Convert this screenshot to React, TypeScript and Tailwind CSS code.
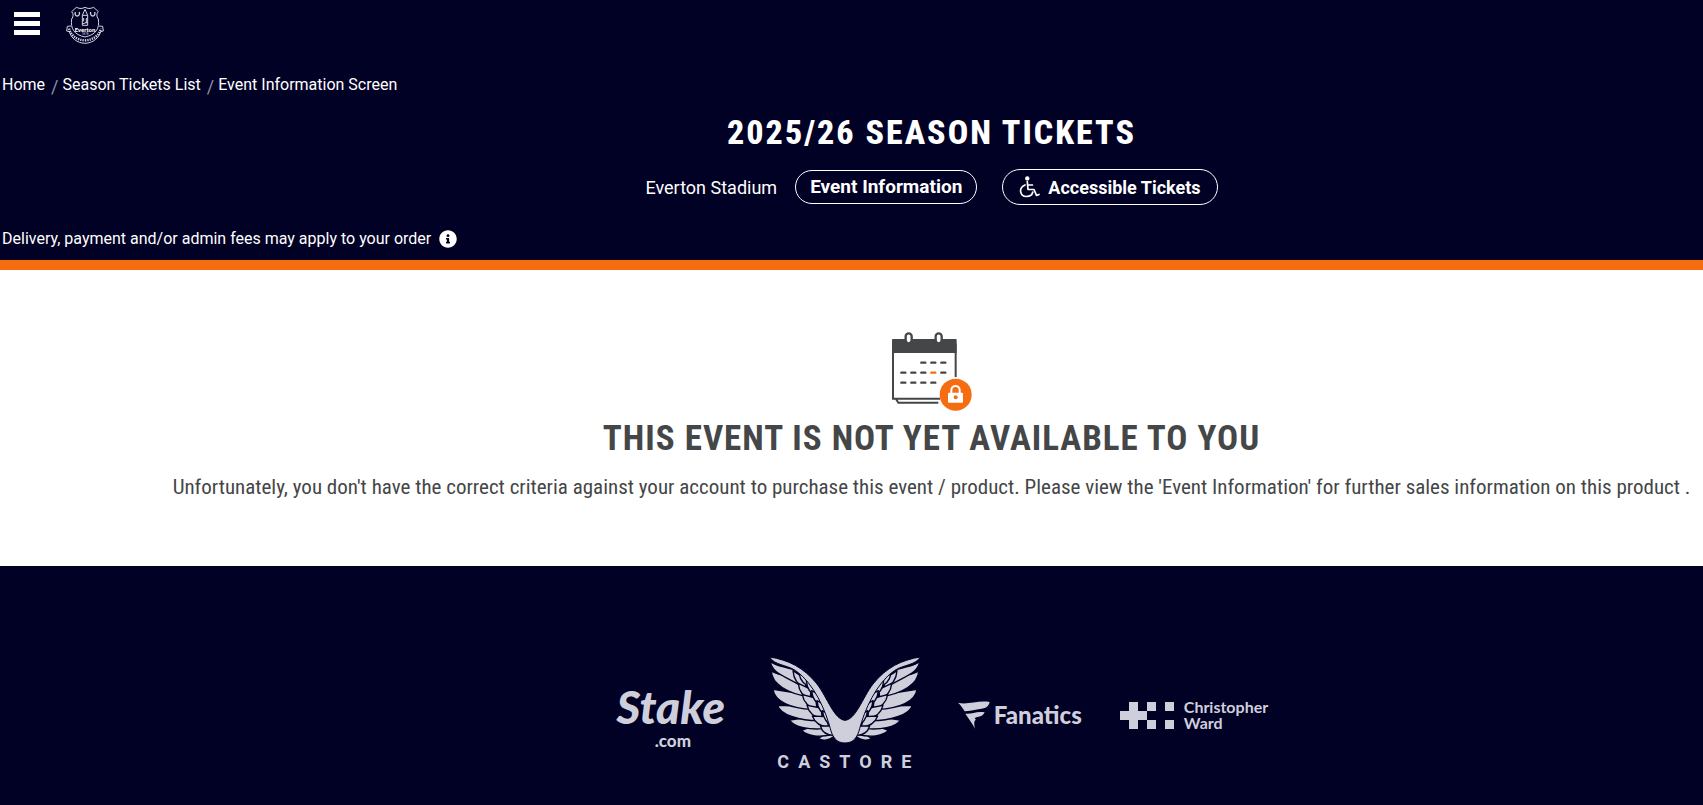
import type { ReactNode } from "react";
import { FaInfoCircle } from "react-icons/fa";

const crumbs = ["Home", "Season Tickets List", "Event Information Screen"];

function Crest() {
  return (
    <svg viewBox="0 0 114 114" className="size-[38px]" fill="none" stroke="#d4d4e4" strokeWidth="3">
      <path d="M31 4 C42 9 49 8 57 4 C65 8 72 9 83 4 L97 17 C91 23 91 31 97 39 C101 68 90 86 57 93 C24 86 13 68 17 39 C23 31 23 23 17 17Z" />
      <path d="M28 18 C23 34 44 34 40 18 M74 18 C70 34 91 34 86 18" strokeWidth="4" />
      <path d="M49 28 L57 10 L65 28 V58 H49Z M49 28 H65 M53 36 V46 M61 36 V52 M49 54 L65 48" strokeWidth="3" />
      <text x="57" y="77" textAnchor="middle" fontSize="18" fontWeight="700" fill="#fff" stroke="none" fontFamily="Roboto, sans-serif">Everton</text>
      <text x="57" y="87" textAnchor="middle" fontSize="9" fill="#d4d4e4" stroke="none" fontFamily="Roboto, sans-serif">1878</text>
      <path d="M15 60 L4 61 L2 75 L10 77 C15 95 32 111 57 112 C82 111 99 95 104 77 L112 75 L110 61 L99 60" strokeWidth="3" />
      <path d="M9 68 C15 88 32 102 57 103 C82 102 99 88 105 68" strokeWidth="7" strokeDasharray="4 3" />
    </svg>
  );
}

function WheelchairIcon() {
  return (
    <svg viewBox="0 0 21 22" className="h-[22px] w-[21px]" fill="none" stroke="currentColor" strokeWidth="1.7" strokeLinecap="round" strokeLinejoin="round">
      <circle cx="8.3" cy="2.4" r="2.2" fill="currentColor" stroke="none" />
      <path d="M8.3 5.5 L9 13.5 H15 L17.5 19.4 L20 18.5 M8.7 9 H13.5" />
      <path d="M6 9 C-1 12 1 20.5 7.5 20.5 C11 20.5 13.2 18.6 13.8 16" />
    </svg>
  );
}

function LockedCalendar() {
  return (
    <svg viewBox="0 0 243 240" className="h-20 w-[81px]" fill="none">
      <path d="M6 38 V203 H147 M194 38 V138" stroke="#444647" strokeWidth="6" />
      <path d="M15 204 L22 215 H142" stroke="#444647" strokeWidth="6" />
      <path d="M3 66 V27 Q3 24 6 24 H194 Q197 24 197 27 V66Z" fill="#444647" />
      <rect x="44" y="7" width="18" height="30" rx="9" fill="#fff" stroke="#444647" strokeWidth="7" />
      <rect x="134" y="7" width="18" height="30" rx="9" fill="#fff" stroke="#444647" strokeWidth="7" />
      <path d="M91 95 H103 M121 95 H133 M151 95 H163 M31 125 H43 M61 125 H73 M91 125 H103 M151 125 H163 M31 155 H43 M61 155 H73 M91 155 H103 M121 155 H133" stroke="#444647" strokeWidth="7" strokeLinecap="round" />
      <path d="M121 125 H133" stroke="#f56c11" strokeWidth="7" strokeLinecap="round" />
      <circle cx="194" cy="191" r="48" fill="#f56c11" />
      <rect x="171" y="185" width="45" height="30" rx="3" fill="#fff" />
      <path d="M181 186 V177 C181 161 206 161 206 177 V186" stroke="#fff" strokeWidth="6" />
      <circle cx="194" cy="199" r="6" fill="#f56c11" />
    </svg>
  );
}

function Wing() {
  return (
    <g fill="#cfcfdc" stroke="#010025" strokeWidth="4" strokeLinejoin="round">
      <path d="M172 296 C186 304 208 300 220 288 L200 276Z" />
      <path d="M122 270 C136 290 178 292 212 284 L186 250Z" />
      <path d="M86 240 C98 262 150 270 186 266 L168 228Z" />
      <path d="M50 196 C58 226 120 242 172 242 L150 200Z" />
      <path d="M36 148 C40 184 90 206 154 208 L136 164Z" />
      <path d="M31 93 C32 132 80 160 142 170 L112 116 C80 108 50 106 31 93Z" />
      <path d="M28 64 C32 98 66 106 118 136 L104 92 C76 80 44 80 28 64Z" />
      <path d="M96 92 C98 122 112 136 132 146 L138 120Z" />
      <path d="M112 130 C114 154 128 170 148 176 L150 148Z" />
      <path d="M124 164 C128 188 144 202 168 208 L164 174Z" />
      <path d="M138 196 C144 220 162 232 184 236 L180 204Z" />
      <path d="M154 228 C162 250 180 260 204 262 L194 230Z" />
      <path d="M178 258 C184 278 200 286 218 286 L208 258Z" />
      <path d="M114 100 C118 124 132 136 152 142 L146 120Z" />
      <path d="M136 122 C138 150 152 164 170 170 L162 138Z" />
      <path d="M152 152 C154 180 170 194 188 200 L178 166Z" />
      <path d="M168 182 C170 210 186 224 204 230 L194 196Z" />
      <path d="M184 212 C188 240 200 252 216 258 L208 226Z" />
    </g>
  );
}

function CastoreWings() {
  return (
    <svg viewBox="24 48 456 264" className="h-[88px] w-[152px]">
      <Wing />
      <g transform="translate(504 0) scale(-1 1)"><Wing /></g>
      <path
        d="M26 51 C82 60 128 82 168 132 C200 174 219 238 252 241 C285 238 304 174 336 132 C376 82 422 60 478 51 C464 76 426 74 400 92 C345 130 310 212 296 266 C289 292 278 309 252 309 C226 309 215 292 208 266 C194 212 159 130 104 92 C78 74 40 76 26 51Z"
        fill="#cfcfdc" stroke="#010025" strokeWidth="3"
      />
    </svg>
  );
}

function SponsorLink({ label, children, className }: { label: string; children: ReactNode; className: string }) {
  return (
    <a href="#" aria-label={label} className={`flex shrink-0 text-[#cfcfdc] ${className}`}>
      {children}
    </a>
  );
}

export default function App() {
  return (
    <div className="flex min-h-screen flex-col bg-[#010025] font-['Roboto',sans-serif] text-white">
      <header className="border-b-10 border-[#f56c11]">
        <div className="flex h-[50px] items-start gap-[26px] pl-3.5">
          <button type="button" aria-label="Menu" className="mt-3 flex w-[26px] flex-col gap-1">
            <span className="h-[5px] bg-white" />
            <span className="h-[5px] bg-white" />
            <span className="h-[5px] bg-white" />
          </button>
          <a href="#" aria-label="Everton" className="mt-1.5"><Crest /></a>
        </div>

        <nav aria-label="Breadcrumb" className="mt-[23px] pl-0.5">
          <ol className="flex text-[16px] leading-6">
            {crumbs.map((c, i) => (
              <li key={c} className="flex">
                {i > 0 && <span className="pt-0.5 pr-1 pl-1.5 text-[18px] leading-6 text-[#8f8fa8]">/</span>}
                <a href="#">{c}</a>
              </li>
            ))}
          </ol>
        </nav>

        <div className="flex flex-col items-center pl-40">
          <h1 className="mt-[13px] font-['Roboto_Condensed',Roboto,sans-serif] text-[34px] leading-10 font-extrabold tracking-[2px]">
            2025/26 SEASON TICKETS
          </h1>
          <div className="mt-[17px] flex items-center">
            <span className="mr-[18px] text-[18px]">Everton Stadium</span>
            <button type="button" className="mr-[25px] h-[34px] rounded-full border border-white px-3.5 text-[19px] font-bold">
              Event Information
            </button>
            <button type="button" className="flex h-9 items-center gap-2 rounded-full border border-white px-4 text-[18px] font-bold">
              <WheelchairIcon />
              Accessible Tickets
            </button>
          </div>
        </div>

        <p className="mt-[22px] flex items-center gap-2 pb-[9px] pl-0.5 text-[16px] leading-6">
          Delivery, payment and/or admin fees may apply to your order
          <FaInfoCircle size={18} />
        </p>
      </header>

      <main className="flex flex-col items-center bg-white pt-[61px] pb-[65px] pl-40 text-[#444647]">
        <LockedCalendar />
        <h2 className="mt-2 font-['Roboto_Condensed',Roboto,sans-serif] text-[35px] leading-10 font-bold tracking-[1px]">
          THIS EVENT IS NOT YET AVAILABLE TO YOU
        </h2>
        <p className="mt-3.5 font-['Roboto_Condensed',Roboto,sans-serif] text-[21px] leading-7">
          Unfortunately, you don't have the correct criteria against your account to purchase this event / product. Please view the 'Event Information' for further sales information on this product .
        </p>
      </main>

      <footer className="flex items-center justify-center pt-[90px] pb-8 pl-[182px]">
        <SponsorLink label="Stake.com" className="mr-11 w-[108px] flex-col items-center font-['Lato',sans-serif]">
          <span className="text-[46px] leading-[52px] font-black italic">Stake</span>
          <span className="pl-1 text-[17px] leading-4 font-black">.com</span>
        </SponsorLink>
        <SponsorLink label="Castore" className="mr-[37px] flex-col items-center">
          <CastoreWings />
          <span className="mt-1.5 pl-2 text-[18px] leading-6 font-bold tracking-[9px]">CASTORE</span>
        </SponsorLink>
        <SponsorLink label="Fanatics" className="mr-[38px] items-center gap-1">
          <svg viewBox="0 0 96 84" className="h-7 w-8" fill="currentColor">
            <path d="M0 5 C28 13 60 -3 95 3 C92 17 84 22 65 24 C48 26 33 31 20 31 C14 21 8 12 0 5Z" />
            <path d="M22 38 C42 40 56 29 80 34 C76 44 68 47 58 48 C50 50 48 54 55 56 C47 58 48 68 51 83 C43 66 31 52 22 38Z" />
          </svg>
          <span className="font-['Lato',sans-serif] text-[24px] leading-8 font-black">Fanatics</span>
        </SponsorLink>
        <SponsorLink label="Christopher Ward" className="items-center gap-2.5">
          <svg viewBox="0 0 54 27" className="h-[27px] w-[54px]" fill="currentColor">
            <path d="M9 0 H18 V9 H27 V18 H18 V27 H9 V18 H0 V9 H9Z" />
            <path d="M27 0 H36 V9 H27Z M27 18 H36 V27 H27Z M45 0 H54 V9 H45Z M45 18 H54 V27 H45Z" />
          </svg>
          <span className="font-['Lato',sans-serif] text-[16px] leading-4 font-bold">
            Christopher
            <br />
            Ward
          </span>
        </SponsorLink>
      </footer>
    </div>
  );
}
